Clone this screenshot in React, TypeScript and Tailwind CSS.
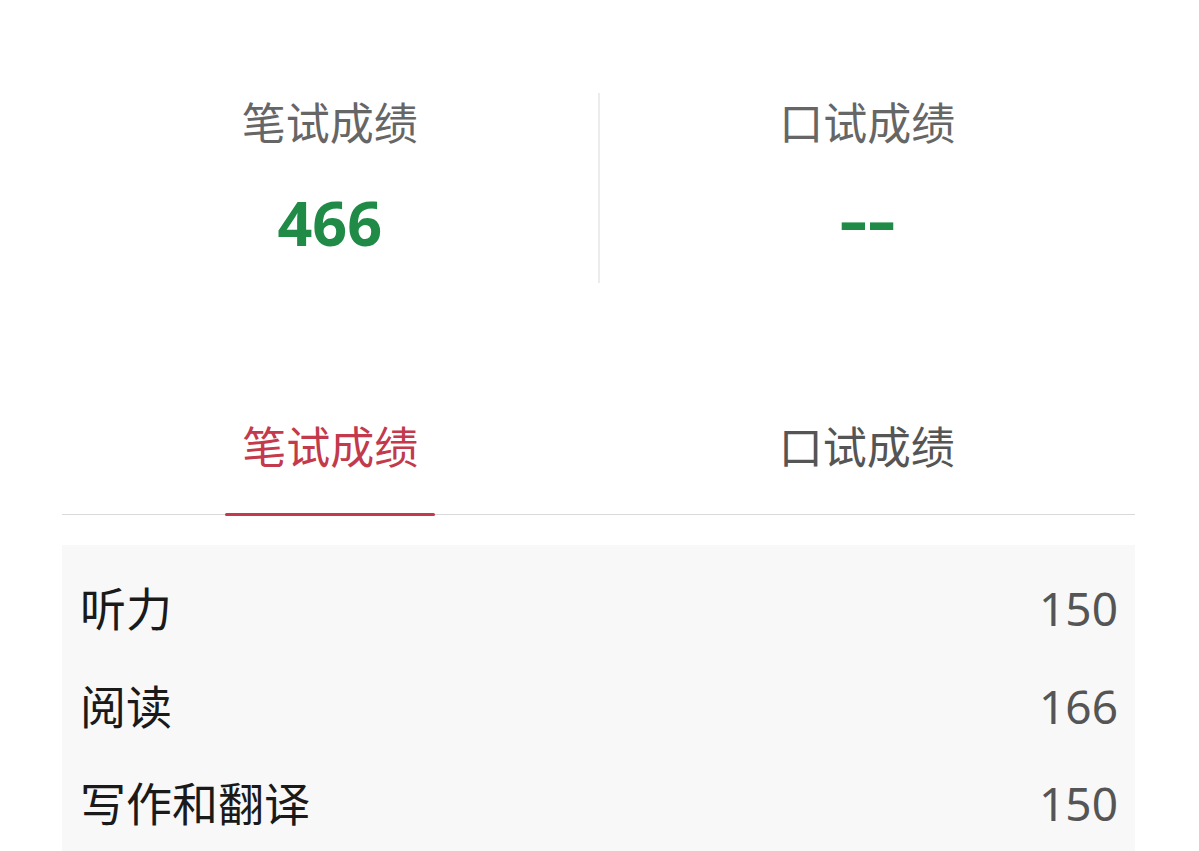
import React from "react";

const rows = [
  { label: "听力", value: "150" },
  { label: "阅读", value: "166" },
  { label: "写作和翻译", value: "150" },
];

export default function App() {
  return (
    <div
      className="w-full h-[851px] bg-white overflow-hidden"
      style={{ fontFamily: '"Noto Sans", "Noto Sans CJK SC", sans-serif' }}
    >
      <div className="ml-[62px] w-[1073px]">
        {/* Summary */}
        <div className="flex mt-[93px] h-[190px]">
          <div className="flex-1 flex flex-col items-center">
            <div className="text-[44px] leading-[60px] text-[#666666]">笔试成绩</div>
            <div className="mt-[40px] text-[61px] leading-[60px] font-bold text-[#1f8b47]">466</div>
          </div>
          <div className="w-[2px] bg-[#ececec]" />
          <div className="flex-1 flex flex-col items-center">
            <div className="text-[44px] leading-[60px] text-[#666666]">口试成绩</div>
            <div className="mt-[37px] text-[61px] leading-[60px] font-bold text-[#1f8b47]">
              <span className="inline-block scale-x-[1.45]">--</span>
            </div>
          </div>
        </div>

        {/* Tabs */}
        <div className="mt-[134px] flex border-b border-[#d9d9d9]">
          <div className="flex-1 flex flex-col items-center">
            <div className="text-[44px] leading-[60px] text-[#c23a4b]">笔试成绩</div>
            <div className="mt-[36px] w-[210px] h-[3px] bg-[#c23a4b] rounded-full -mb-[2px]" />
          </div>
          <div className="flex-1 flex flex-col items-center">
            <div className="text-[44px] leading-[60px] text-[#555555]">口试成绩</div>
          </div>
        </div>

        {/* Detail panel */}
        <div className="mt-[30px] bg-[#f8f8f8] pt-[15px] pl-[18px] pr-[17px] pb-[10px]">
          {rows.map((r) => (
            <div key={r.label} className="flex items-center justify-between h-[97.5px]">
              <span className="text-[46px] text-[#1a1a1a]">{r.label}</span>
              <span className="text-[46px] text-[#555555]">{r.value}</span>
            </div>
          ))}
        </div>
      </div>
    </div>
  );
}
